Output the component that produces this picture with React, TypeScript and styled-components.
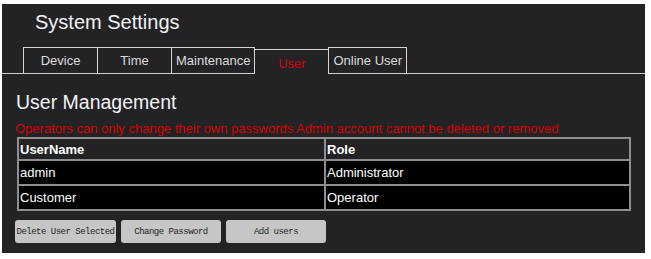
import React from 'react';
import styled, { createGlobalStyle } from 'styled-components';

const GlobalStyle = createGlobalStyle`
  body {
    margin: 0;
    background: #ffffff;
    font-family: 'Liberation Sans', Arial, sans-serif;
  }
`;

const tabs = ['Device', 'Time', 'Maintenance', 'User', 'Online User'];
const activeTab = 'User';

const users = [
  { name: 'admin', role: 'Administrator' },
  { name: 'Customer', role: 'Operator' },
];

const actions = ['Delete User Selected', 'Change Password', 'Add users'];

const App: React.FC = () => (
  <>
    <GlobalStyle />
    <Panel>
      <Title>System Settings</Title>
      <TabBar>
        {tabs.map((t) => (
          <Tab key={t} $active={t === activeTab}>
            {t}
          </Tab>
        ))}
      </TabBar>

      <Content>
        <Heading>User Management</Heading>
        <Warning>
          Operators can only change their own passwords Admin account cannot be deleted or removed
        </Warning>
        <Table>
          <thead>
            <tr>
              <HeadCell>UserName</HeadCell>
              <HeadCell>Role</HeadCell>
            </tr>
          </thead>
          <tbody>
            {users.map((u) => (
              <tr key={u.name}>
                <Cell>{u.name}</Cell>
                <Cell>{u.role}</Cell>
              </tr>
            ))}
          </tbody>
        </Table>
        <Actions>
          {actions.map((a) => (
            <ActionButton key={a}>{a}</ActionButton>
          ))}
        </Actions>
      </Content>
    </Panel>
  </>
);

export default App;

const Panel = styled.div`
  box-sizing: border-box;
  width: 643px;
  height: 249px;
  margin: 4px 0 0 2px;
  padding: 6px 0 0 0;
  background: #232326;
  display: flex;
  flex-direction: column;
`;

const Title = styled.h1`
  margin: 0 0 13px 33px;
  font-size: 20px;
  line-height: 24px;
  font-weight: normal;
  color: #f2f2f2;
`;

const TabBar = styled.div`
  display: flex;
  align-items: flex-end;
  height: 27px;
  padding-left: 21px;
  border-bottom: 1px solid #cfcfcf;
  box-sizing: border-box;
`;

const Tab = styled.div<{ $active?: boolean }>`
  box-sizing: border-box;
  min-width: 75px;
  height: ${(p) => (p.$active ? '25px' : '26px')};
  margin-left: -1px;
  margin-bottom: ${(p) => (p.$active ? '-1px' : '0')};
  padding: ${(p) => (p.$active ? '3px 4px 0' : '0 4px')};
  border: 1px solid #d4d4d4;
  border-bottom: none;
  background: #232326;
  color: ${(p) => (p.$active ? '#d40000' : '#dcdcdc')};
  font-size: 13px;
  display: flex;
  align-items: center;
  justify-content: center;
  white-space: nowrap;

  &:first-child {
    margin-left: 0;
  }
`;

const Content = styled.div`
  padding: 16px 0 0 12px;
  display: flex;
  flex-direction: column;
  align-items: flex-start;
`;

const Heading = styled.h2`
  margin: 0 0 7px 2px;
  font-size: 19.5px;
  line-height: 24px;
  font-weight: normal;
  color: #f2f2f2;
`;

const Warning = styled.p`
  margin: 0 0 0 1px;
  font-size: 13px;
  line-height: 16px;
  color: #d40000;
  white-space: nowrap;
`;

const Table = styled.table`
  width: 614px;
  margin-left: 3px;
  border-collapse: collapse;
  border: 2px solid #8e8e8e;
  font-size: 13px;
  color: #ffffff;
`;

const HeadCell = styled.th`
  height: 20px;
  padding: 0 1px;
  border: 2px solid #8e8e8e;
  background: #232326;
  text-align: left;
  font-weight: bold;

  &:first-child {
    width: 303px;
  }
`;

const Cell = styled.td`
  height: 23px;
  padding: 0 1px;
  border: 2px solid #8e8e8e;
  background: #000000;
`;

const Actions = styled.div`
  display: flex;
  gap: 5px;
  margin: 9px 0 0 1px;
`;

const ActionButton = styled.button`
  box-sizing: border-box;
  width: 101px;
  height: 23px;
  padding: 0;
  border: none;
  border-radius: 3px;
  background: #c6c6c6;
  color: #1e1e1e;
  font-family: 'Liberation Mono', 'Courier New', monospace;
  font-size: 9px;
  letter-spacing: -0.5px;
  cursor: pointer;

  & + & {
    width: 100px;
  }
`;
